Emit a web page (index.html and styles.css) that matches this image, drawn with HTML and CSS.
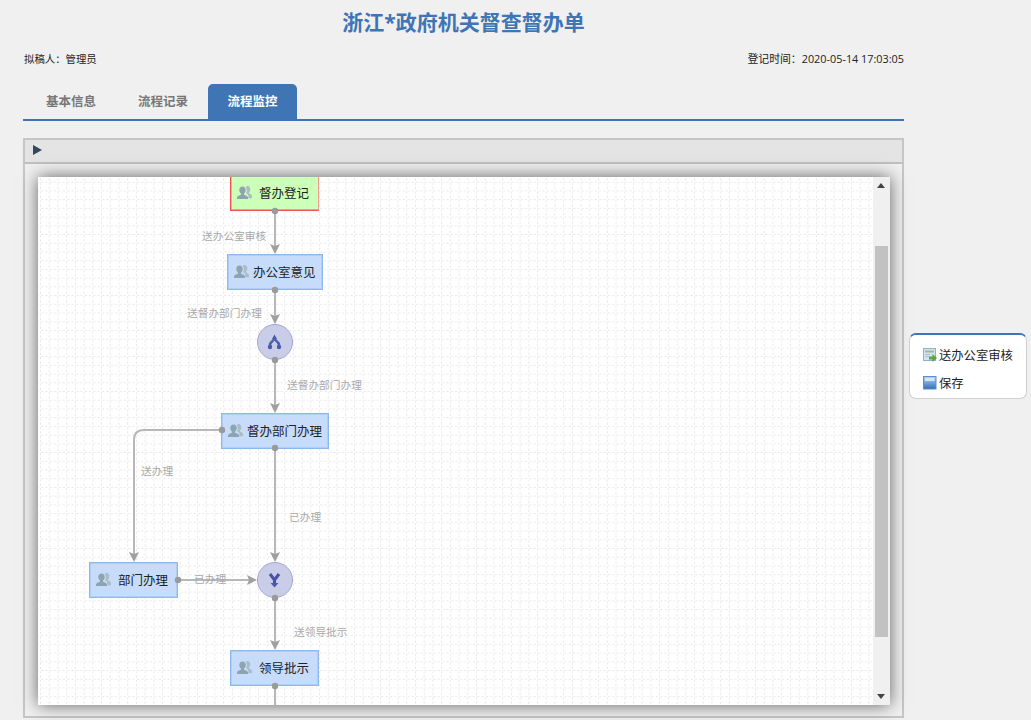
FILE: index.html
```html
<!DOCTYPE html>
<html lang="zh-CN">
<head>
<meta charset="utf-8">
<title>浙江*政府机关督查督办单</title>
<link rel="stylesheet" href="styles.css">
</head>
<body>
<svg class="defs" width="0" height="0" aria-hidden="true">
  <defs>
    <symbol id="people" viewBox="0 0 15 15">
      <path fill="#a9bcc7" d="M10.500 1c1.800 0 2.800 1.400 2.800 3.200 0 1.400-.6 2.600-1.400 3.200v1.200c1 .4 3 1 3 2.400v2.200h-3.500V10.600c0-1-1-1.800-2.400-2.400.9-1.200 1-2.800.6-4.200C9.200 3 9 2 8.800 1.500 9.300 1.200 9.900 1 10.500 1z"/>
      <path fill="#8da4b1" d="M5.500 1.500c2 0 3.200 1.500 3.200 3.500 0 1.500-.7 2.800-1.600 3.500v1.200c1.300.5 3.900 1.200 3.900 2.800v1.500H0v-1.500c0-1.600 2.600-2.300 3.900-2.800V8.500C3 7.800 2.300 6.500 2.300 5c0-2 1.200-3.500 3.200-3.500z"/>
    </symbol>
  </defs>
</svg>
<main class="page">
  <h1 class="title">浙江*政府机关督查督办单</h1>
  <div class="meta">
    <span>拟稿人：管理员</span>
    <span class="meta-time">登记时间：2020-05-14 17:03:05</span>
  </div>
  <nav class="tabs">
    <a class="tab">基本信息</a>
    <a class="tab">流程记录</a>
    <a class="tab tab-active">流程监控</a>
  </nav>
  <section class="panel">
    <header class="panel-head"><span class="play"></span></header>
    <div class="panel-body">
      <div class="viewer">
        <div class="canvas">
          <svg class="wires" width="835" height="528" viewBox="0 0 835 528" aria-hidden="true">
            <defs>
              <pattern id="grid" width="8.72" height="8.72" patternUnits="userSpaceOnUse" x="2" y="-4">
                <path d="M1.200 .5H3.200M5.400 .5H7.400" stroke="#e6e6e6" stroke-width="1"/>
                <path d="M.5 1.200V3.200M.5 5.400V7.400" stroke="#e6e6e6" stroke-width="1"/>
              </pattern>
            </defs>
            <rect width="835" height="528" fill="url(#grid)"/>
            <g class="wire">
              <path d="M237 34V70"/>
              <path d="M237 113V140"/>
              <path d="M237 183V229"/>
              <path d="M237 271V378"/>
              <path d="M184 253H106Q96 253 96 263V378"/>
              <path d="M140 403H212"/>
              <path d="M237 421V466"/>
              <path d="M237 509V528"/>
            </g>
            <g class="head">
              <polygon points="237,77 232,67 237,69 242,67"/>
              <polygon points="237,147 232,137 237,139 242,137"/>
              <polygon points="237,236 232,226 237,228 242,226"/>
              <polygon points="237,385 232,375 237,377 242,375"/>
              <polygon points="96,385 91,375 96,377 101,375"/>
              <polygon points="219,403 209,398 211,403 209,408"/>
              <polygon points="237,473 232,463 237,465 242,463"/>
            </g>
            <circle class="gate" cx="237" cy="165" r="17.500"/>
            <circle class="gate" cx="237" cy="403" r="17.500"/>
            <path class="gate-mark" d="M232 170V168C232 164 236.500 165 236.500 160C236.500 165 241 164 241 168V170"/>
            <circle class="gate-dot" cx="232" cy="170" r="2.200"/>
            <circle class="gate-dot" cx="241" cy="170" r="2.200"/>
            <polygon class="gate-dot" points="236.500,157.500 234,162 239,162"/>
            <path class="gate-arm" d="M232 397L236.500 403L241 397M236.500 403V407"/>
            <polygon class="gate-dot" points="236.500,410.500 232.500,406 240.500,406"/>
          </svg>

          <div class="node node-start n1"><svg class="who" width="15" height="15"><use href="#people"/></svg><span class="node-text wide">督办登记</span></div>
          <div class="node n2"><svg class="who" width="15" height="15"><use href="#people"/></svg><span class="node-text">办公室意见</span></div>
          <div class="node n3"><svg class="who" width="15" height="15"><use href="#people"/></svg><span class="node-text">督办部门办理</span></div>
          <div class="node n4"><svg class="who" width="15" height="15"><use href="#people"/></svg><span class="node-text wide">部门办理</span></div>
          <div class="node n5"><svg class="who" width="15" height="15"><use href="#people"/></svg><span class="node-text wide">领导批示</span></div>

          <svg class="ports" width="835" height="528" viewBox="0 0 835 528" aria-hidden="true">
            <circle cx="237" cy="34" r="3.200"/>
            <circle cx="237" cy="113" r="3.200"/>
            <circle cx="237" cy="183" r="3.200"/>
            <circle cx="184" cy="253" r="3.200"/>
            <circle cx="237" cy="271" r="3.200"/>
            <circle cx="140" cy="403" r="3.200"/>
            <circle cx="237" cy="421" r="3.200"/>
            <circle cx="237" cy="509" r="3.200"/>
          </svg>

          <span class="edge e1">送办公室审核</span>
          <span class="edge e2">送督办部门办理</span>
          <span class="edge e3">送督办部门办理</span>
          <span class="edge e4">送办理</span>
          <span class="edge e5">已办理</span>
          <span class="edge e6">已办理</span>
          <span class="edge e7">送领导批示</span>
        </div>
        <div class="scrollbar">
          <span class="arrow arrow-up"></span>
          <span class="thumb"></span>
          <span class="arrow arrow-down"></span>
        </div>
      </div>
    </div>
  </section>
</main>
<aside class="actions">
  <div class="action">
    <svg class="action-icon" width="14" height="14" viewBox="0 0 14 14" aria-hidden="true">
      <rect x=".5" y=".5" width="12" height="12" fill="#d5e3f0" stroke="#8fb0d0"/>
      <rect x="2" y="2.500" width="9" height="2" fill="#9dbb8f"/>
      <path d="M2 6.500h5M2 8.500h4" stroke="#a9c2d8"/>
      <path d="M6 8.500h3.500V6l4.500 4-4.500 4v-2.500H6z" fill="#58a83c"/>
    </svg>
    <span>送办公室审核</span>
  </div>
  <div class="action">
    <svg class="action-icon" width="14" height="14" viewBox="0 0 14 14" aria-hidden="true">
      <defs><linearGradient id="save" x1="0" y1="0" x2="0" y2="1"><stop offset="0" stop-color="#bcd6f0"/><stop offset="1" stop-color="#2f6fb5"/></linearGradient></defs>
      <rect x=".5" y=".5" width="12.500" height="12.500" fill="url(#save)" stroke="#5b8fc5"/>
      <rect x="2" y="2" width="9.500" height="3" fill="#d4e4f4"/>
    </svg>
    <span>保存</span>
  </div>
</aside>
</body>
</html>
```
FILE: styles.css
```css
* { box-sizing: border-box; }

html, body {
  margin: 0;
  height: 720px;
  overflow: hidden;
}

body {
  background: #f0f0f0;
  color: #222;
  font-family: "Open Sans", "Noto Sans CJK SC", sans-serif;
  font-size: 10.5px;
}

.defs { position: absolute; }

.page {
  width: 881px;
  margin-left: 23px;
}

.title {
  margin: 0;
  height: 46px;
  line-height: 44px;
  text-align: center;
  color: #3f75b5;
  font-size: 21px;
  font-weight: 700;
}

.meta {
  display: flex;
  justify-content: space-between;
  align-items: center;
  height: 26px;
  padding: 0 0 2px 1px;
  font-size: 10.4px;
}

.meta-time { font-size: 10.850px; }

.tabs {
  display: flex;
  height: 37px;
  margin-top: 12px;
  border-bottom: 2px solid #3f75b5;
  padding-left: 2px;
}

.tab {
  width: 92px;
  line-height: 35px;
  text-align: center;
  color: #777;
  font-size: 12.500px;
  font-weight: 700;
}

.tab-active {
  width: 89px;
  margin-left: -1px;
  border-radius: 5px 5px 0 0;
  background: #3f75b5;
  color: #fff;
}

.panel {
  height: 580px;
  margin-top: 17px;
  border: 2px solid #c6c6c6;
}

.panel-head {
  display: flex;
  align-items: center;
  height: 24px;
  padding: 0 0 2px 8px;
  background: #e4e4e4;
  border-bottom: 2px solid #c0c0c0;
}

.play {
  width: 0;
  height: 0;
  border-style: solid;
  border-width: 5px 0 5px 9px;
  border-color: transparent transparent transparent #33475e;
}

.panel-body {
  padding: 13px 12px 11px 13px;
}

.viewer {
  display: flex;
  height: 528px;
  background: #fff;
  box-shadow: 0 0 16px rgba(0, 0, 0, .6);
}

.canvas {
  position: relative;
  flex: 1;
  overflow: hidden;
}

.wires,
.ports {
  position: absolute;
  left: 0;
  top: 0;
}

.ports circle { fill: #9a9a9a; }

.wire path {
  fill: none;
  stroke: #b8b8b8;
  stroke-width: 2;
}

.head polygon { fill: #a0a0a0; }

.gate {
  fill: #c9cde7;
  stroke: #a3a8cf;
  stroke-width: 1;
}

.gate-mark {
  fill: none;
  stroke: #4a62ae;
  stroke-width: 2.500;
}

.gate-arm {
  fill: none;
  stroke: #4a50a8;
  stroke-width: 3;
}

.gate-dot { fill: #4a5aac; }

.node {
  position: absolute;
  display: flex;
  align-items: center;
  height: 36px;
  padding: 0 0 2px 6px;
  background: #c6dcfa;
  border: 1px solid #8db8ee;
  box-shadow: inset 0 0 0 1px rgba(141, 184, 238, .4);
  color: #222;
  font-size: 12.500px;
}

.who { flex: none; }

.node-text { margin-left: 4px; white-space: nowrap; }
.node-text.wide { margin-left: 7px; }

.node-start {
  background: #ccffb8;
  border: 1px solid #ef5353;
  border-right-color: #f59a8a;
  box-shadow: inset 0 -1px 0 rgba(239, 83, 83, .5), inset 1px 0 0 rgba(239, 83, 83, .4);
}

.n1 { left: 192px; top: -2px; width: 89px; }
.n2 { left: 189px; top: 77px; width: 96px; }
.n3 { left: 183px; top: 236px; width: 108px; }
.n4 { left: 51px; top: 385px; width: 89px; }
.n5 { left: 192px; top: 473px; width: 89px; }

.edge {
  position: absolute;
  line-height: 14px;
  color: #a8a8a8;
  font-size: 10.700px;
  white-space: nowrap;
}

.e1 { left: 164px; top: 52px; }
.e2 { left: 149px; top: 129px; }
.e3 { left: 249px; top: 201px; }
.e4 { left: 103px; top: 287px; }
.e5 { left: 251px; top: 333px; }
.e6 { left: 156px; top: 395px; }
.e7 { left: 256px; top: 448px; }

.scrollbar {
  position: relative;
  flex: none;
  width: 17px;
  background: #f0f0f0;
}

.thumb {
  position: absolute;
  left: 2px;
  top: 69px;
  width: 13px;
  height: 391px;
  background: #c2c2c2;
}

.arrow {
  position: absolute;
  left: 4px;
  width: 0;
  height: 0;
  border-style: solid;
}

.arrow-up {
  top: 6px;
  border-width: 0 4px 5px 4px;
  border-color: transparent transparent #444 transparent;
}

.arrow-down {
  bottom: 6px;
  border-width: 5px 4px 0 4px;
  border-color: #444 transparent transparent transparent;
}

.actions {
  position: absolute;
  left: 909px;
  top: 333px;
  width: 118px;
  height: 66px;
  padding: 6px 0 0 13px;
  background: #fff;
  border: 1px solid #cfcfcf;
  border-top: 2px solid #3f75b5;
  border-radius: 7px;
  font-size: 12.300px;
}

.action {
  display: flex;
  align-items: center;
  gap: 2px;
  height: 28px;
  color: #222;
  white-space: nowrap;
}

.action-icon { flex: none; }
```
